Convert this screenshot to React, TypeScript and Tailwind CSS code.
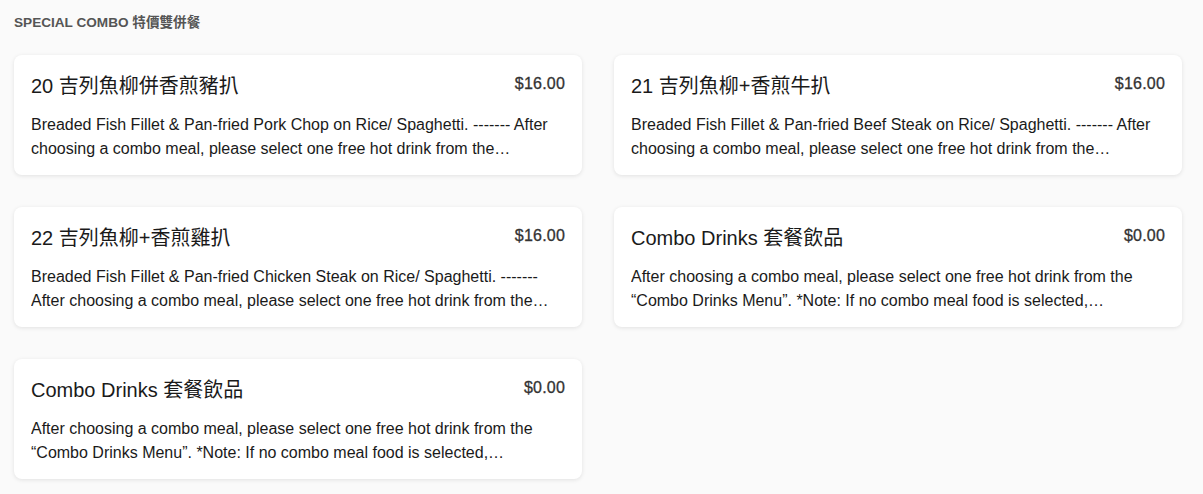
import React from "react";

type Item = {
    id: number;
    name: string;
    price: string;
    description: string;
}

const items: Item[] = [
    {
        id: 1,
        name: "20 吉列魚柳併香煎豬扒",
        price: "$16.00",
        description: "Breaded Fish Fillet & Pan-fried Pork Chop on Rice/ Spaghetti. ------- After choosing a combo meal, please select one free hot drink from the…",
    },
    {
        id: 2,
        name: "21 吉列魚柳+香煎牛扒",
        price: "$16.00",
        description: "Breaded Fish Fillet & Pan-fried Beef Steak on Rice/ Spaghetti. ------- After choosing a combo meal, please select one free hot drink from the…",
    },
    {
        id: 3,
        name: "22 吉列魚柳+香煎雞扒",
        price: "$16.00",
        description: "Breaded Fish Fillet & Pan-fried Chicken Steak on Rice/ Spaghetti. ------- After choosing a combo meal, please select one free hot drink from the…",
    },
    {
        id: 4,
        name: "Combo Drinks 套餐飲品",
        price: "$0.00",
        description: "After choosing a combo meal, please select one free hot drink from the “Combo Drinks Menu”. *Note: If no combo meal food is selected,…",
    },
    {
        id: 5,
        name: "Combo Drinks 套餐飲品",
        price: "$0.00",
        description: "After choosing a combo meal, please select one free hot drink from the “Combo Drinks Menu”. *Note: If no combo meal food is selected,…",
    },
];

const font = { fontFamily: '"Liberation Sans", "Noto Sans CJK TC", sans-serif' };

function MenuItemCard({item}: {item: Item}) {
    return (
        <div className="bg-white rounded-lg shadow-[0_1px_4px_rgba(0,0,0,0.1)] px-[17px] pt-[17px] pb-[14px] h-[120px]">
            <div className="flex items-start justify-between gap-4">
                <h3 className="text-[20px] leading-[28px] text-[#1a1a1a] font-normal">{item.name}</h3>
                <span className="text-[16px] leading-[24px] tracking-[0.2px] text-[#333] [-webkit-text-stroke:0.3px_#333]">{item.price}</span>
            </div>
            <p className="mt-[13px] text-[16px] leading-6 text-[#1a1a1a] line-clamp-2">{item.description}</p>
        </div>
    )
}

export default function App() {
    return (
        <div className="min-h-screen bg-[#fafafa] pl-[14px] pt-[14px] pb-4" style={font}>
            <h2 className="text-[13.6px] leading-[18px] font-semibold text-[#555] mb-[23px]">SPECIAL COMBO 特價雙併餐</h2>
            <div className="grid grid-cols-[568px_568px] gap-x-[32px] gap-y-[32px]">
                {items.map(item => (
                    <MenuItemCard key={item.id} item={item}/>
                ))}
            </div>
        </div>
    )
}
